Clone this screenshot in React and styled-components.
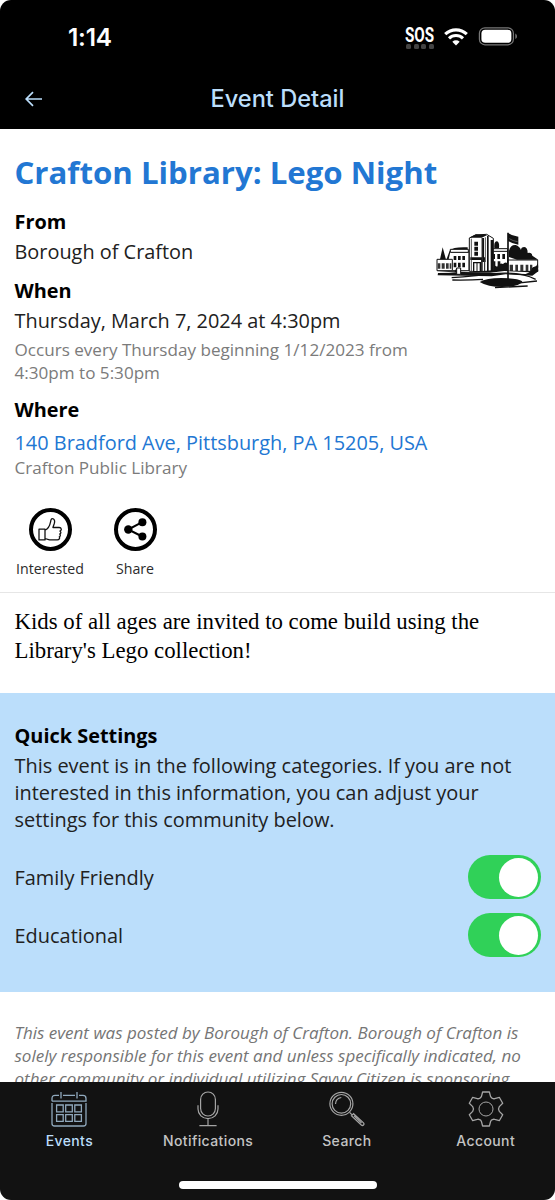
import { useState } from 'react';
import styled, { createGlobalStyle } from 'styled-components';

const GlobalStyle = createGlobalStyle`
  * {
    box-sizing: border-box;
  }
  body {
    margin: 0;
    background: #fff;
    font-family: 'Open Sans', sans-serif;
  }
`;

const Phone = styled.div`
  display: flex;
  flex-direction: column;
  width: 555px;
  height: 1200px;
  overflow: hidden;
  border-radius: 11px;
  background: #fff;
`;

const Header = styled.header`
  flex: none;
  height: 129px;
  background: #000;
`;

const StatusBar = styled.div`
  display: flex;
  justify-content: space-between;
  height: 74px;
  padding: 0 37px 0 68px;
`;

const Time = styled.span`
  padding-top: 23px;
  font: 600 24.4px/28px Inter, sans-serif;
  letter-spacing: -0.2px;
  color: #fff;
`;

const StatusIcons = styled.div`
  display: flex;
  align-items: flex-start;
  padding-top: 26px;
`;

const Sos = styled.div`
  width: 30px;
  margin-right: 9px;
`;

const SosText = styled.span`
  display: block;
  width: 40px;
  font: 700 20px/18px Roboto, sans-serif;
  color: #fff;
  transform: scaleX(0.76);
  transform-origin: left;
`;

const SosDots = styled.div`
  display: flex;
  justify-content: space-between;
  padding: 0 1px;
  & > i {
    width: 5px;
    height: 5px;
    border-radius: 1.5px;
    background: #434343;
  }
`;

const NavBar = styled.div`
  display: grid;
  grid-template-columns: 66px 1fr 66px;
  align-items: center;
  height: 49px;
`;

const BackButton = styled.button`
  display: flex;
  padding: 0 0 0 25px;
  border: 0;
  background: none;
  color: #bbdefb;
`;

const NavTitle = styled.h1`
  margin: 0;
  font: 500 23.6px/30px Inter, sans-serif;
  text-align: center;
  color: #bbdefb;
`;

const Content = styled.main`
  flex: 1;
  min-height: 0;
  overflow: hidden;
`;

const Summary = styled.section`
  height: 464px;
  padding: 23px 14px 0 14.5px;
  border-bottom: 1px solid #e6e6e6;
`;

const Title = styled.h2`
  margin: 0 0 16px;
  font-size: 31.2px;
  line-height: 40px;
  color: #2277d3;
`;

const Columns = styled.div`
  display: flex;
  justify-content: space-between;
`;

const Field = styled.div`
  height: ${({ $height }) => $height}px;
`;

const Label = styled.h3`
  margin: 0;
  font-size: 19.9px;
  line-height: 28px;
  color: #000;
`;

const Value = styled.p`
  margin: 1px 0 0;
  font-size: 19.9px;
  line-height: 30px;
  white-space: nowrap;
  color: #212121;
`;

const Note = styled.p`
  margin: 2px 0 0;
  font-size: 17.1px;
  line-height: 23px;
  white-space: nowrap;
  color: #7b7b7b;
`;

const Address = styled.a`
  display: block;
  padding-top: 5px;
  font-size: 19.9px;
  line-height: 28px;
  white-space: nowrap;
  text-decoration: none;
  color: #2277d3;
`;

const Place = styled(Note)`
  margin-top: -1px;
`;

const Logo = styled.svg`
  flex: none;
  width: 106px;
  height: 58px;
  margin: 24px 0 0;
`;

const Actions = styled.div`
  display: flex;
  gap: 14px;
`;

const Action = styled.button`
  display: flex;
  flex-direction: column;
  align-items: center;
  width: 71px;
  padding: 0;
  border: 0;
  background: none;
  font: 400 14.2px/20px 'Open Sans', sans-serif;
  color: #2b2b2b;
`;

const Circle = styled.span`
  display: flex;
  align-items: center;
  justify-content: center;
  width: 43px;
  height: 43px;
  margin-bottom: 8px;
  border: 4px solid #000;
  border-radius: 50%;
`;

const Description = styled.p`
  height: 100px;
  margin: 0;
  padding: 15px 14px 0 14.5px;
  font: 22.8px/28.5px 'Liberation Serif', serif;
  color: #000;
`;

const Settings = styled.section`
  height: 299px;
  padding: 29px 14px 0 14.5px;
  background: #bbdefb;
`;

const SettingsText = styled.p`
  margin: 2px 0 22px;
  font-size: 19.95px;
  line-height: 27px;
  color: #212121;
  white-space: nowrap;
`;

const SettingRow = styled.div`
  display: flex;
  align-items: center;
  justify-content: space-between;
  height: 44px;
  margin-bottom: 14px;
  font-size: 19.95px;
  color: #212121;
`;

const Toggle = styled.button`
  display: flex;
  align-items: center;
  justify-content: ${({ $on }) => ($on ? 'flex-end' : 'flex-start')};
  width: 73px;
  height: 44px;
  padding: 0 3px;
  border: 0;
  border-radius: 22px;
  background: ${({ $on }) => ($on ? '#30d158' : '#e9e9ea')};
`;

const Knob = styled.span`
  width: 39px;
  height: 39px;
  border-radius: 50%;
  background: #fff;
`;

const Disclaimer = styled.p`
  margin: 0;
  padding: 29px 14px 0 14.5px;
  font-size: 17px;
  font-style: italic;
  line-height: 23px;
  white-space: nowrap;
  color: #757575;
`;

const TabBar = styled.nav`
  display: flex;
  flex-direction: column;
  align-items: center;
  flex: none;
  height: 118px;
  background: #121212;
`;

const Tabs = styled.div`
  display: grid;
  grid-template-columns: repeat(4, 1fr);
  width: 100%;
  height: 99px;
`;

const Tab = styled.button`
  display: flex;
  flex-direction: column;
  align-items: center;
  padding: 9px 0 0;
  border: 0;
  background: none;
  font: 500 14px/18px Inter, sans-serif;
  letter-spacing: 0.4px;
  color: ${({ $active }) => ($active ? '#bbdefb' : '#c4c4c4')};
  & > svg {
    margin-bottom: 5px;
    color: ${({ $active }) => ($active ? '#90a9bd' : '#a5a5a5')};
  }
`;

const HomeIndicator = styled.div`
  width: 198px;
  height: 8px;
  border-radius: 4px;
  background: #fff;
`;

const WifiIcon = () => (
  <svg width="24" height="18" viewBox="0 0 24 18" style={{ marginTop: 2 }}>
    <g fill="none" stroke="#fff" strokeWidth="3.1">
      <path d="M1.2 6.2C7.3.4 16.7.4 22.8 6.2" />
      <path d="M5 10.4c4-3.8 10-3.8 14 0" />
    </g>
    <path d="M8.3 13.7c2.2-1.8 5.2-1.8 7.4 0L12 17.6z" fill="#fff" />
  </svg>
);

const BatteryIcon = () => (
  <svg width="40" height="20" viewBox="0 0 40 20" style={{ marginLeft: 10 }}>
    <rect x="1.4" y="1.8" width="34" height="17" rx="5.5" fill="none" stroke="#777" strokeWidth="1.2" />
    <rect x="3.4" y="3.8" width="30" height="13" rx="3.8" fill="#fff" />
    <path d="M37.3 7.5c2.2 1 2.2 4.6 0 5.6z" fill="#777" />
  </svg>
);

const BackIcon = () => (
  <svg width="18" height="16" viewBox="0 0 18 16" fill="none" stroke="currentColor" strokeWidth="1.7">
    <path d="M17 8H1.5M8 1.2L1.2 8 8 14.8" />
  </svg>
);

const TownHall = () => (
  <Logo viewBox="30 36 318 174">
    {/* trees behind the wings */}
    <path
      d="M44 122l4-18 5-22 6 22 5 18zM74 92q10-12 54-10v14H76l-6 26h-7zM208 84q-2-20 8-20 8 2 6 20zM252 92q4-18 20-17 12 4 16 15 0-9 10-9 10 2 10 18 12-3 14 8l18 12H276l-24-8z"
      fill="#111"
    />
    {/* wings */}
    <path d="M78 96h54v56H82V118H36v34h46M192 92h56v58h-56zM248 120h90v34h-90z" fill="#fff" stroke="#111" strokeWidth="3" />
    <path d="M76 88h54v9H76zM190 86h58v8h-58z" fill="#fff" stroke="#111" strokeWidth="3" />
    <path
      d="M86 108h8v12h-8zM99 108h8v12h-8zM112 108h8v12h-8zM86 128h8v14h-8zM99 128h8v14h-8zM112 128h8v14h-8zM202 102h8v15h-8zM217 102h8v15h-8zM232 102h8v15h-8zM203 124h8v14h-8zM218 124h8v14h-8z"
      fill="#111"
    />
    <path
      d="M38 130h8v16h-8zM50 130h9v16h-9zM63 130h8v16h-8zM74 130h5v16h-5zM254 134h10v20h-10zM271 134h8v20h-8zM286 134h9v20h-9zM302 134h8v20h-8zM315 134h7v20h-7z"
      fill="#333"
    />
    {/* shrubs in front of the right wing */}
    <path d="M192 150q2-12 10-8 6-8 14-2 8-14 18-8 6-8 14-2v30h-56zM318 156q0-14 10-16 8-1 10-10 4 14-2 26z" fill="#111" />
    {/* tower */}
    <path d="M133 54l18-9 34-2 20 12v99h-72z" fill="#fff" stroke="#111" strokeWidth="3" />
    <path d="M133 53l20-10 34 2-17 8zM170 54h7v72h-7zM186 48h5v108h-5zM197 60h8v94h-8zM136 112h44v8h-44z" fill="#111" />
    <path d="M139 56v100M172 54v100M181 52v74" stroke="#333" strokeWidth="2.5" />
    <path d="M148 65h11v12h-11zM148 80h11v12h-11zM148 95h11v12h-11z" fill="#111" />
    <path d="M146 128h20v27h-20z" fill="#fff" stroke="#111" strokeWidth="4" />
    <path d="M156 127v28M170 120v36M179 120v36" stroke="#111" strokeWidth="3" />
    {/* grounds */}
    <path
      d="M35 153l54 1 5-9h14v10l34 1 46-4 50-4 14 4 74 2 12-15 2 15-18 13-80-4-42 6-80-2-82-1 1-7 60-1z"
      fill="#111"
    />
    <path d="M95 144h12v19H95z" fill="#fff" stroke="#111" strokeWidth="3" />
    <path d="M110 159l86-1 42-5 76 4-12 5-96-3z" fill="#fff" />
    <path d="M80 173q70-4 124-12 80-7 128 17M82 180q50 1 92-2M270 190l66-7M210 203l98-5" fill="none" stroke="#111" strokeWidth="4" />
    <path d="M164 186q20-12 64-12 50 0 64 10-4 16-60 17-44 0-68-15z" fill="#111" />
    {/* flag */}
    <path d="M249 38v142" stroke="#111" strokeWidth="5" />
    <path d="M249 39q12 9 31 11v24q-18-3-31-11z" fill="#111" />
    <path d="M253 56q10 7 25 9" stroke="#777" strokeWidth="2" fill="none" />
  </Logo>
);

const ThumbIcon = () => (
  <svg width="24" height="25" viewBox="0 0 24 25" fill="none" stroke="#111" strokeWidth="1.3" strokeLinejoin="round">
    <path d="M1 12.2h6v10.7H1zM7 13.3c3.2-1.7 4.8-4.5 5.5-8.2C12.8 3 13 1.7 14.2 1.7c2.4 0 2.8 2.6 2.1 4.8l-1.4 4h6.2c2.6 0 2.9 2.8.8 3.5 1.4.9 1.2 2.5-.2 3.1 1 .9.7 2.2-.4 2.7.9 1.4-.2 3.1-2 3.1h-7.8L7 21.5" />
  </svg>
);

const ShareIcon = () => (
  <svg width="25" height="25" viewBox="0 0 25 25" fill="#000">
    <path d="M19.2 5.2L5.2 12.5l14 7" fill="none" stroke="#000" strokeWidth="2" />
    <circle cx="5.3" cy="12.5" r="4.2" />
    <circle cx="19.4" cy="5.3" r="4" />
    <circle cx="19.4" cy="19.6" r="4" />
  </svg>
);

const CalendarIcon = () => (
  <svg width="36" height="36" viewBox="0 0 36 36" fill="none" stroke="currentColor" strokeWidth="1.3">
    <path d="M1 10.2h34V7.4q0-3-3-3h-4M24 4.4H12M8 4.4H4q-3 0-3 3v2.8M10 1v6.5M26 1v6.5M1 12v20.5Q1 35 3.5 35h29q2.5 0 2.5-2.5V12" />
    <path d="M5.6 14h6.6v6.8H5.6zM14.7 14h6.6v6.8h-6.6zM23.8 14h6.6v6.8h-6.6zM5.6 23.6h6.6v6.8H5.6zM14.7 23.6h6.6v6.8h-6.6zM23.8 23.6h6.6v6.8h-6.6z" />
  </svg>
);

const MicIcon = () => (
  <svg width="36" height="36" viewBox="0 0 36 36" fill="none" stroke="currentColor" strokeWidth="1.2">
    <rect x="10.6" y="1" width="14.8" height="24" rx="7.4" />
    <path d="M8 14.3v3.8a10 9.5 0 0 0 20 0v-3.8M18 27.6v7M9.4 34.6h17.2" />
  </svg>
);

const SearchIcon = () => (
  <svg width="36" height="36" viewBox="0 0 36 36" fill="none" stroke="currentColor" strokeWidth="1.2">
    <circle cx="12.4" cy="12.8" r="11.5" />
    <circle cx="12.4" cy="12.8" r="9.3" />
    <path d="M6.5 13q.2-5.6 5.8-6.5M20.6 21.4l3 3M22.4 24.8l2.1-2.1 10 9.1q1 1.2 0 2.2t-2.2 0zM25 24.9l7.5 7.1" />
  </svg>
);

const GearIcon = () => (
  <svg width="36" height="36" viewBox="0 0 36 36" fill="none" stroke="currentColor" strokeWidth="1.3" strokeLinejoin="round">
    <path d="M14.6 1h6.8l1.2 4.6q.5 1.2 1.7 1.7 1.2.7 2.4.3l4.6-1.3 3.4 5.9-3.4 3.4q-1.6 2.4 0 4.8l3.4 3.4-3.4 5.9-4.6-1.3q-1.2-.4-2.4.3-1.2.5-1.7 1.7L21.4 35h-6.8l-1.2-4.6q-.5-1.2-1.7-1.7-1.2-.7-2.4-.3l-4.6 1.3-3.4-5.9 3.4-3.4q1.6-2.4 0-4.8l-3.4-3.4 3.4-5.9 4.6 1.3q1.2.4 2.4-.3 1.2-.5 1.7-1.7z" />
    <circle cx="18" cy="18" r="7" strokeWidth="1" />
  </svg>
);

const tabs = [
  { name: 'Events', Icon: CalendarIcon },
  { name: 'Notifications', Icon: MicIcon },
  { name: 'Search', Icon: SearchIcon },
  { name: 'Account', Icon: GearIcon },
];

const CategoryToggle = ({ name }) => {
  const [on, setOn] = useState(true);

  return (
    <SettingRow>
      <span>{name}</span>
      <Toggle $on={on} role="switch" aria-checked={on} aria-label={name} onClick={() => setOn(!on)}>
        <Knob />
      </Toggle>
    </SettingRow>
  );
};

const App = () => {
  const [active, setActive] = useState('Events');

  return (
    <Phone>
      <GlobalStyle />
      <Header>
        <StatusBar>
          <Time>1:14</Time>
          <StatusIcons>
            <Sos>
              <SosText>SOS</SosText>
              <SosDots>
                <i />
                <i />
                <i />
                <i />
              </SosDots>
            </Sos>
            <WifiIcon />
            <BatteryIcon />
          </StatusIcons>
        </StatusBar>
        <NavBar>
          <BackButton aria-label="Back">
            <BackIcon />
          </BackButton>
          <NavTitle>Event Detail</NavTitle>
        </NavBar>
      </Header>
      <Content>
        <Summary>
          <Title>Crafton Library: Lego Night</Title>
          <Columns>
            <div>
              <Field $height={69}>
                <Label>From</Label>
                <Value>Borough of Crafton</Value>
              </Field>
              <Field $height={119}>
                <Label>When</Label>
                <Value>Thursday, March 7, 2024 at 4:30pm</Value>
                <Note>
                  Occurs every Thursday beginning 1/12/2023 from
                  <br />
                  4:30pm to 5:30pm
                </Note>
              </Field>
              <Field $height={112}>
                <Label>Where</Label>
                <Address href="#">140 Bradford Ave, Pittsburgh, PA 15205, USA</Address>
                <Place>Crafton Public Library</Place>
              </Field>
            </div>
            <TownHall />
          </Columns>
          <Actions>
            <Action>
              <Circle>
                <ThumbIcon />
              </Circle>
              Interested
            </Action>
            <Action>
              <Circle>
                <ShareIcon />
              </Circle>
              Share
            </Action>
          </Actions>
        </Summary>
        <Description>
          Kids of all ages are invited to come build using the
          <br />
          Library's Lego collection!
        </Description>
        <Settings>
          <Label>Quick Settings</Label>
          <SettingsText>
            This event is in the following categories. If you are not
            <br />
            interested in this information, you can adjust your
            <br />
            settings for this community below.
          </SettingsText>
          <CategoryToggle name="Family Friendly" />
          <CategoryToggle name="Educational" />
        </Settings>
        <Disclaimer>
          This event was posted by Borough of Crafton. Borough of Crafton is
          <br />
          solely responsible for this event and unless specifically indicated, no
          <br />
          other community or individual utilizing Savvy Citizen is sponsoring
        </Disclaimer>
      </Content>
      <TabBar>
        <Tabs>
          {tabs.map(({ name, Icon }) => (
            <Tab key={name} $active={name === active} onClick={() => setActive(name)}>
              <Icon />
              {name}
            </Tab>
          ))}
        </Tabs>
        <HomeIndicator />
      </TabBar>
    </Phone>
  );
};

export default App;
